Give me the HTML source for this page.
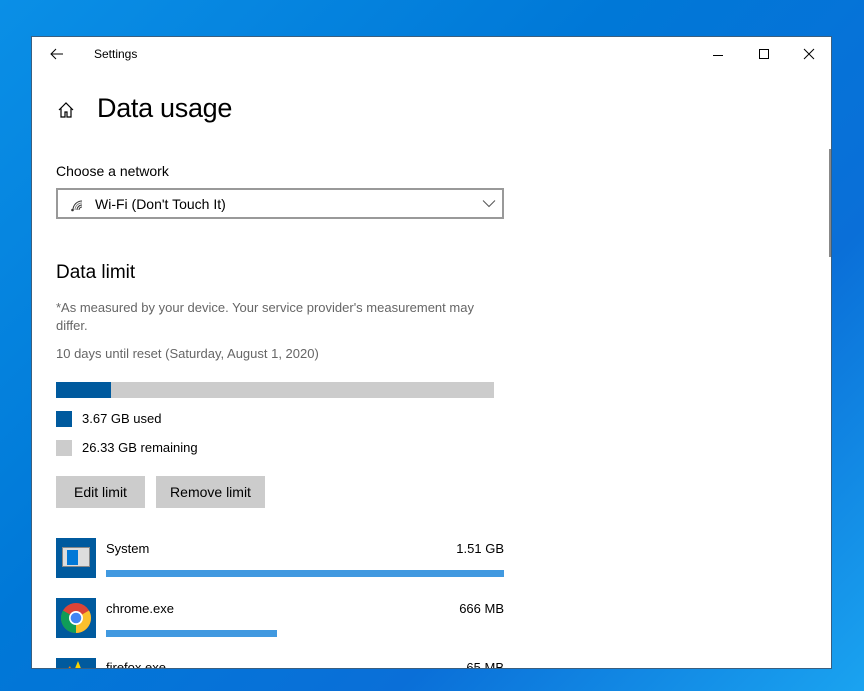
<!DOCTYPE html>
<html><head><meta charset="utf-8"><style>
*{margin:0;padding:0;box-sizing:border-box}
body{width:864px;height:691px;overflow:hidden;position:relative;font-family:"Liberation Sans",sans-serif;color:#000;
background:linear-gradient(135deg,#0a8fe6 0%,#0078d7 40%,#0a6fd8 70%,#1aa3f0 100%)}
#win{position:absolute;left:31px;top:36px;width:801px;height:633px;background:#fff;border:1px solid #3a5f80;overflow:hidden}
.a{position:absolute;white-space:nowrap}
.s13{font-size:13px}
.s14{font-size:14px}
.gray{color:#666}
.r{position:absolute;width:200px;text-align:right;left:272px;font-size:13px}
.btn{position:absolute;background:#ccc;font-size:14px;text-align:center;line-height:32px;height:32px}
.bar{position:absolute;height:7px;background:#4199e0}
</style></head><body>
<div id="win">
<svg class="a" style="left:18px;top:10px" width="14" height="14" viewBox="0 0 14 14"><path d="M13 7H1M6 2L1 7l5 5" fill="none" stroke="#000" stroke-width="1"/></svg>
<div class="a" style="left:62px;top:10px;font-size:12px">Settings</div>
<svg class="a" style="left:680px;top:12px" width="12" height="12"><path d="M1 6.5h10" stroke="#000"/></svg>
<svg class="a" style="left:726px;top:11px" width="12" height="12"><rect x="1.5" y="1.5" width="9" height="9" fill="none" stroke="#000"/></svg>
<svg class="a" style="left:771px;top:11px" width="12" height="12"><path d="M1 1l10 10M11 1L1 11" stroke="#000"/></svg>
<svg class="a" style="left:25px;top:64px" width="18" height="18" viewBox="0 0 18 18"><path d="M2 9L9 2l7 7M4 7.5V16h4v-5h2v5h4V7.5" fill="none" stroke="#000" stroke-width="1.2"/></svg>
<div class="a" style="left:65px;top:56px;font-size:27px;font-weight:300;letter-spacing:-0.3px">Data usage</div>
<div class="a s14" style="left:24px;top:126px">Choose a network</div>
<div class="a" style="left:24px;top:151px;width:448px;height:31px;border:2px solid #999"></div>
<svg class="a" style="left:38px;top:161px" width="14" height="14" viewBox="0 0 14 14"><g fill="none" stroke="#333" stroke-width="1"><path d="M3 12a9 9 0 0 1 9-9"/><path d="M5 12a7 7 0 0 1 7-7" opacity=".6"/><path d="M7 12a5 5 0 0 1 5-5"/><path d="M9 12a3 3 0 0 1 3-3"/></g><circle cx="2.5" cy="12" r="1.3" fill="#333"/></svg>
<div class="a s14" style="left:63px;top:159px">Wi-Fi (Don't Touch It)</div>
<svg class="a" style="left:450px;top:162px" width="14" height="9"><path d="M1 1.5l6 6 6-6" fill="none" stroke="#555"/></svg>
<div class="a" style="left:24px;top:225px;font-size:19px">Data limit</div>
<div class="a s13 gray" style="left:24px;top:262px;line-height:18px">*As measured by your device. Your service provider's measurement may<br>differ.</div>
<div class="a s13 gray" style="left:24px;top:309px">10 days until reset (Saturday, August 1, 2020)</div>
<div class="a" style="left:24px;top:345px;width:438px;height:16px;background:#ccc"></div>
<div class="a" style="left:24px;top:345px;width:55px;height:16px;background:#005a9e"></div>
<div class="a" style="left:24px;top:374px;width:16px;height:16px;background:#005a9e"></div>
<div class="a s13" style="left:50px;top:374px">3.67 GB used</div>
<div class="a" style="left:24px;top:403px;width:16px;height:16px;background:#ccc"></div>
<div class="a s13" style="left:50px;top:403px">26.33 GB remaining</div>
<div class="btn" style="left:24px;top:439px;width:89px">Edit limit</div>
<div class="btn" style="left:124px;top:439px;width:109px">Remove limit</div>
<div class="a" style="left:24px;top:501px;width:40px;height:40px;background:#005a9e"></div>
<div class="a" style="left:30px;top:510px;width:28px;height:20px;background:#ddd;border:1px solid #888"></div>
<div class="a" style="left:35px;top:513px;width:11px;height:15px;background:#0078d7"></div>
<div class="a s13" style="left:74px;top:504px">System</div>
<div class="r" style="top:504px">1.51 GB</div>
<div class="bar" style="left:74px;top:533px;width:398px"></div>
<div class="a" style="left:24px;top:561px;width:40px;height:40px;background:#005a9e"></div>
<svg class="a" style="left:29px;top:566px" width="30" height="30" viewBox="0 0 30 30"><circle cx="15" cy="15" r="15" fill="#db4437"/><path d="M15 15L28 7.5A15 15 0 0 1 15 30z" fill="#fbc02d"/><path d="M15 15L15 30A15 15 0 0 1 2 7.5z" fill="#0f9d58"/><circle cx="15" cy="15" r="7" fill="#fff"/><circle cx="15" cy="15" r="5.3" fill="#4285f4"/></svg>
<div class="a s13" style="left:74px;top:564px">chrome.exe</div>
<div class="r" style="top:564px">666 MB</div>
<div class="bar" style="left:74px;top:593px;width:171px"></div>
<div class="a" style="left:24px;top:621px;width:40px;height:40px;background:#005a9e"></div>
<svg class="a" style="left:34px;top:622px" width="24" height="12"><path d="M8 12l4-10 4 10z" fill="#fbd300"/><path d="M0 12l4-5 2 5z" fill="#f57c00"/></svg>
<div class="a s13" style="left:74px;top:623px">firefox.exe</div>
<div class="r" style="top:623px">65 MB</div>
<div class="a" style="left:797px;top:112px;width:2px;height:108px;background:#888"></div>
</div>
</body></html>
